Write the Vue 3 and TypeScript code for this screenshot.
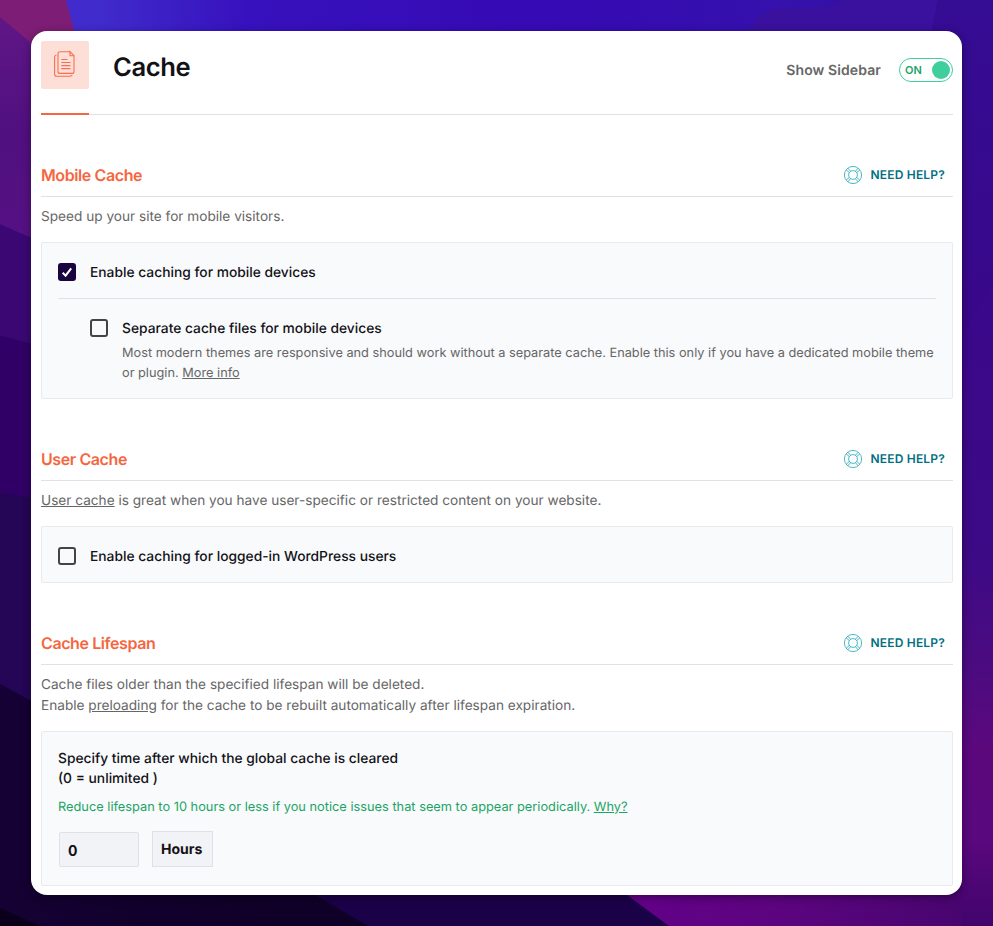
<script setup lang="ts">
import { ref } from 'vue'

const showSidebar = ref<boolean>(true)
const mobileCache = ref<boolean>(true)
const separateFiles = ref<boolean>(false)
const userCache = ref<boolean>(false)
const lifespan = ref<string>('0')
const sections: string[] = ['Mobile Cache', 'User Cache', 'Cache Lifespan']
</script>

<template>
  <div class="desktop">
    <svg class="wallpaper" viewBox="0 0 993 926" preserveAspectRatio="none" aria-hidden="true">
      <defs>
        <linearGradient id="top" x1="0" x2="1" y1="0" y2="0">
          <stop offset="0" stop-color="#452bd0" />
          <stop offset="0.1" stop-color="#402bcc" />
          <stop offset="0.25" stop-color="#3711bd" />
          <stop offset="0.55" stop-color="#360ab4" />
          <stop offset="0.8" stop-color="#3511ac" />
          <stop offset="1" stop-color="#350c94" />
        </linearGradient>
        <linearGradient id="right" x1="0" x2="0" y1="0" y2="1">
          <stop offset="0" stop-color="#350c94" />
          <stop offset="0.35" stop-color="#380889" />
          <stop offset="0.6" stop-color="#3d0a86" />
          <stop offset="0.72" stop-color="#4c0b80" />
          <stop offset="0.81" stop-color="#5c087d" />
          <stop offset="0.91" stop-color="#59087d" />
          <stop offset="1" stop-color="#41046c" />
        </linearGradient>
        <linearGradient id="bottom" x1="0" x2="1" y1="0" y2="0">
          <stop offset="0" stop-color="#64008a" />
          <stop offset="0.5" stop-color="#5c047f" />
          <stop offset="1" stop-color="#48056f" />
        </linearGradient>
        <linearGradient id="violet" x1="0" x2="0" y1="0" y2="1">
          <stop offset="0" stop-color="#601687" />
          <stop offset="0.5" stop-color="#50107f" />
          <stop offset="1" stop-color="#561184" />
        </linearGradient>
        <linearGradient id="night" x1="0" x2="1" y1="0" y2="0">
          <stop offset="0" stop-color="#160134" />
          <stop offset="0.3" stop-color="#12002d" />
          <stop offset="1" stop-color="#0e0025" />
        </linearGradient>
      </defs>
      <rect width="993" height="926" fill="#160333" />
      <path d="M0 0H993V400H0Z" fill="url(#top)" />
      <path d="M745 35Q760 8 782 8H812Q832 8 842 0H938L925 60Z" fill="#3a109e" />
      <path d="M938 0H993V926H900V60H925Z" fill="url(#right)" />
      <path d="M993 285L940 370V440H993Z" fill="#470c90" opacity="0.2" />
      <path d="M0 0H66L82 60H0Z" fill="#7d1d75" />
      <path d="M0 17L30 42L60 80V250L0 224Z" fill="url(#violet)" />
      <path d="M0 224L60 250V355L0 335Z" fill="#3b0873" />
      <path d="M0 335L60 352V505L0 493Z" fill="#310066" />
      <path d="M0 493L60 502V717L0 684Z" fill="#240556" />
      <path d="M0 684L60 717V860H380V926H0Z" fill="url(#night)" />
      <path d="M255 860L368 926H700L600 860Z" fill="#1b0147" />
      <path d="M600 875H962V926H669Z" fill="url(#bottom)" />
      <path d="M0 908L40 926H0Z" fill="#0a001b" />
    </svg>

    <main class="card">
      <header class="page-head">
        <div class="page-icon">
          <svg width="48" height="48" viewBox="0 0 48 48" fill="none" stroke="#f7704f" stroke-width="1.1">
            <path d="M29 10.7H19Q17 10.7 17 12.7V30.4Q17 32.4 19 32.4H31Q33 32.4 33 30.4V14.7L29 10.7V14.7H33" />
            <path d="M15.5 14.3Q13.6 14.3 13.6 16.3V33.3Q13.6 35.3 15.6 35.3H29Q31 35.3 31.2 33.8" />
            <path d="M20.3 18.5H26.5M20.3 21.5H29.5M20.3 24.6H29.5M20.3 27.6H29.5" />
          </svg>
        </div>
        <h1>Cache</h1>
        <div class="sidebar-toggle">
          <span class="toggle-label">Show Sidebar</span>
          <button class="switch" :class="{ off: !showSidebar }" type="button" @click="showSidebar = !showSidebar">
            <span>{{ showSidebar ? 'ON' : 'OFF' }}</span>
            <i class="knob"></i>
          </button>
        </div>
      </header>

      <section v-for="(title, index) in sections" :key="title">
        <div class="section-head">
          <h2>{{ title }}</h2>
          <a class="help">
            <svg width="20" height="20" viewBox="0 0 20 20" fill="none" stroke="#4cb9c9" stroke-width="1">
              <circle cx="10" cy="10" r="8.6" />
              <circle cx="10" cy="10" r="4.4" />
              <path d="M3.2 4.9L6.3 7.6M4.9 3.2L7.6 6.3M16.8 4.9L13.7 7.6M15.1 3.2L12.4 6.3M3.2 15.1L6.3 12.4M4.9 16.8L7.6 13.7M16.8 15.1L13.7 12.4M15.1 16.8L12.4 13.7" />
            </svg>
            <span>NEED HELP?</span>
          </a>
        </div>

        <template v-if="index === 0">
          <p class="desc">Speed up your site for mobile visitors.</p>
          <div class="panel">
            <label class="option ruled">
              <input v-model="mobileCache" type="checkbox" />
              <span class="box"><svg viewBox="0 0 18 18"><path d="M4.7 9.8L7.6 12.7L13.2 5.3" /></svg></span>
              <span class="label">Enable caching for mobile devices</span>
            </label>
            <div class="option nested">
              <input v-model="separateFiles" type="checkbox" />
              <span class="box" @click="separateFiles = !separateFiles"><svg viewBox="0 0 18 18"><path d="M4.7 9.8L7.6 12.7L13.2 5.3" /></svg></span>
              <div>
                <div class="label">Separate cache files for mobile devices</div>
                <p class="note">Most modern themes are responsive and should work without a separate cache. Enable this only if you have a dedicated mobile theme<br />or plugin. <a>More info</a></p>
              </div>
            </div>
          </div>
        </template>

        <template v-else-if="index === 1">
          <p class="desc"><a>User cache</a> is great when you have user-specific or restricted content on your website.</p>
          <div class="panel">
            <label class="option">
              <input v-model="userCache" type="checkbox" />
              <span class="box"><svg viewBox="0 0 18 18"><path d="M4.7 9.8L7.6 12.7L13.2 5.3" /></svg></span>
              <span class="label">Enable caching for logged-in WordPress users</span>
            </label>
          </div>
        </template>

        <template v-else>
          <p class="desc">Cache files older than the specified lifespan will be deleted.<br />Enable <a>preloading</a> for the cache to be rebuilt automatically after lifespan expiration.</p>
          <div class="panel lifespan">
            <div class="label">Specify time after which the global cache is cleared<br />(0 = unlimited )</div>
            <p class="tip">Reduce lifespan to 10 hours or less if you notice issues that seem to appear periodically. <a>Why?</a></p>
            <div class="fields">
              <input v-model="lifespan" class="amount" type="text" />
              <div class="unit">Hours</div>
            </div>
          </div>
        </template>
      </section>
    </main>
  </div>
</template>

<style>
body {
  margin: 0;
}
</style>

<style scoped>
* {
  box-sizing: border-box;
}
.desktop {
  position: relative;
  width: 993px;
  height: 926px;
  padding: 31px;
  overflow: hidden;
  font-family: Inter, 'Liberation Sans', sans-serif;
  text-rendering: geometricPrecision;
  color: #121116;
}
.wallpaper {
  position: absolute;
  inset: 0;
  width: 100%;
  height: 100%;
}
.card {
  position: relative;
  height: 864px;
  padding: 10px 9px 9px 10px;
  border-radius: 16px;
  background: #fff;
  box-shadow: 0 2px 9px rgba(0, 0, 0, 0.38);
}
h1,
h2,
p {
  margin: 0;
}
a {
  text-decoration: underline;
  cursor: pointer;
}
.page-head {
  display: flex;
  align-items: flex-start;
  height: 74px;
  border-bottom: 1px solid #e0e1e7;
  margin-bottom: 40px;
}
.page-icon {
  position: relative;
  width: 48px;
  height: 48px;
  border-radius: 2px;
  background: #fddfd8;
}
.page-icon svg {
  display: block;
}
.page-icon::after {
  content: '';
  position: absolute;
  left: 0;
  top: 72px;
  width: 48px;
  height: 2px;
  background: #f56640;
}
h1 {
  margin-left: 24px;
  padding-top: 11px;
  font-size: 25.6px;
  font-weight: 600;
  line-height: 32px;
  letter-spacing: -0.4px;
}
.sidebar-toggle {
  display: flex;
  align-items: center;
  gap: 18px;
  margin-left: auto;
  padding-top: 16px;
}
.toggle-label {
  font-size: 14px;
  font-weight: 600;
  line-height: 24px;
  padding-top: 2px;
  color: #666;
  letter-spacing: 0.1px;
}
.switch {
  display: flex;
  align-items: center;
  justify-content: space-between;
  width: 54px;
  height: 24px;
  padding: 0 2px 0 5px;
  border: 1px solid #3ecf9c;
  border-radius: 12px;
  background: #fff;
  color: #1ba466;
  font: 600 11px Inter, sans-serif;
}
.switch.off {
  flex-direction: row-reverse;
}
.knob {
  width: 18px;
  height: 18px;
  border-radius: 50%;
  background: #3ecf9c;
}
section {
  margin-bottom: 40px;
}
.section-head {
  display: flex;
  align-items: center;
  justify-content: space-between;
  height: 42px;
  padding: 0 8px 2px 0;
  border-bottom: 1px solid #e0e1e7;
}
h2 {
  color: #f56640;
  font-size: 16px;
  font-weight: 600;
  line-height: 24px;
  letter-spacing: -0.4px;
}
.help {
  display: flex;
  align-items: center;
  gap: 7px;
  color: #02707f;
  font-size: 12px;
  font-weight: 600;
  text-decoration: none;
  letter-spacing: 0.2px;
}
.desc {
  margin: 10px 0 14px;
  color: #666;
  font-size: 13.63px;
  line-height: 21px;
  white-space: nowrap;
}
.panel {
  padding: 0 16px;
  border: 1px solid #e8eaef;
  border-radius: 2px;
  background: #f9fafc;
}
.option {
  display: flex;
  align-items: flex-start;
  gap: 14px;
  padding: 20px 0 15px;
}
.option input {
  display: none;
}
.ruled {
  border-bottom: 1px solid #e0e1e7;
}
.nested {
  padding: 20px 0 14px 32px;
}
.box {
  flex: none;
  width: 18px;
  height: 18px;
  border: 2px solid #444;
  border-radius: 3px;
}
.box svg {
  display: none;
  width: 18px;
  height: 18px;
  margin: -2px;
  fill: none;
  stroke: #fff;
  stroke-width: 2;
}
input:checked + .box {
  border-color: #190440;
  background: #190440;
}
input:checked + .box svg {
  display: block;
}
.label {
  font-size: 13.8px;
  font-weight: 500;
  line-height: 20px;
  white-space: nowrap;
}
.note {
  margin-top: 5px;
  color: #666;
  font-size: 12.77px;
  line-height: 20px;
  white-space: nowrap;
}
.lifespan {
  height: 155px;
  padding-top: 17px;
}
.tip {
  margin-top: 9px;
  color: #1ba466;
  font-size: 12.8px;
  line-height: 20px;
  white-space: nowrap;
}
.fields {
  display: flex;
  align-items: flex-end;
  gap: 13px;
  margin: 13px 0 0 1px;
}
.amount,
.unit {
  border: 1px solid #e0e1e7;
  background: #f2f3f7;
  color: #121116;
  font: 700 14px Inter, sans-serif;
}
.amount {
  width: 80px;
  height: 35px;
  padding: 1px 8px 0;
  border-radius: 2px;
  outline: none;
}
.unit {
  width: 61px;
  height: 36px;
  padding-left: 8px;
  line-height: 36px;
}
</style>
